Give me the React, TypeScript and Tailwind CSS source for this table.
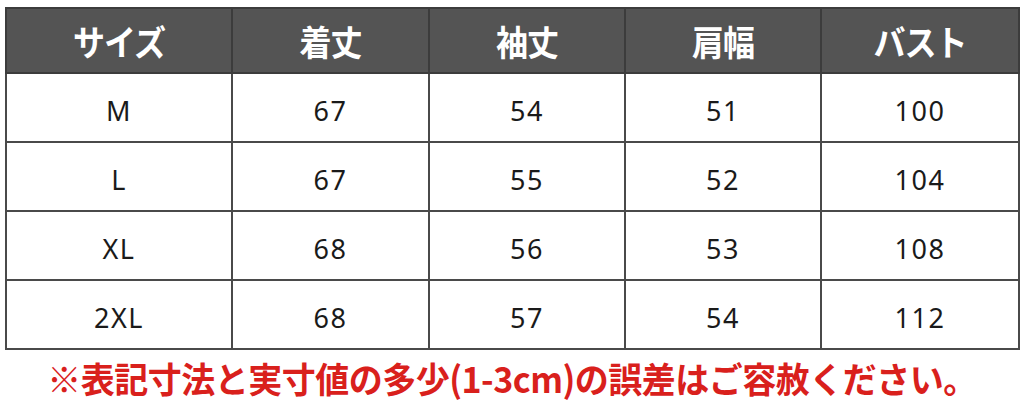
const headers = ["サイズ", "着丈", "袖丈", "肩幅", "バスト"];

const rows = [
  ["M", "67", "54", "51", "100"],
  ["L", "67", "55", "52", "104"],
  ["XL", "68", "56", "53", "108"],
  ["2XL", "68", "57", "54", "112"],
];

const widths = ["w-[226px]", "w-[197px]", "w-[196px]", "w-[196px]", "w-[198px]"];

export default function App() {
  return (
    <div className="w-[1024px] h-[419px] bg-white pt-[7px] pl-[5px] overflow-hidden">
      <table className="table-fixed border-collapse w-[1014px]">
        <colgroup>
          {widths.map((w, i) => (
            <col key={i} className={w} />
          ))}
        </colgroup>
        <thead>
          <tr className="h-[65px] bg-[#545454]">
            {headers.map((h) => (
              <th
                key={h}
                className="border-2 border-[#3c3c3c] p-0 text-center text-white text-[32px] font-bold leading-none tracking-[-1px] font-['Noto_Sans_CJK_JP',sans-serif]"
              >
                <span className="inline-block scale-y-110">{h}</span>
              </th>
            ))}
          </tr>
        </thead>
        <tbody>
          {rows.map((r) => (
            <tr key={r[0]} className="h-[69px]">
              {r.map((c, i) => (
                <td
                  key={i}
                  className="border-2 border-[#4a4a4a] p-0 pt-[6px] text-center text-[#1a1a1a] text-[27px] leading-none tracking-[1.5px] font-['Noto_Sans',sans-serif]"
                >
                  {c}
                </td>
              ))}
            </tr>
          ))}
        </tbody>
      </table>
      <p className="mt-[11px] -ml-[5px] text-center text-[#d9201c] text-[34px] font-bold leading-none tracking-[-0.5px] font-['Noto_Sans_CJK_JP',sans-serif]">
        <span className="inline-block scale-y-105">※表記寸法と実寸値の多少(1-3cm)の誤差はご容赦ください。</span>
      </p>
    </div>
  );
}
